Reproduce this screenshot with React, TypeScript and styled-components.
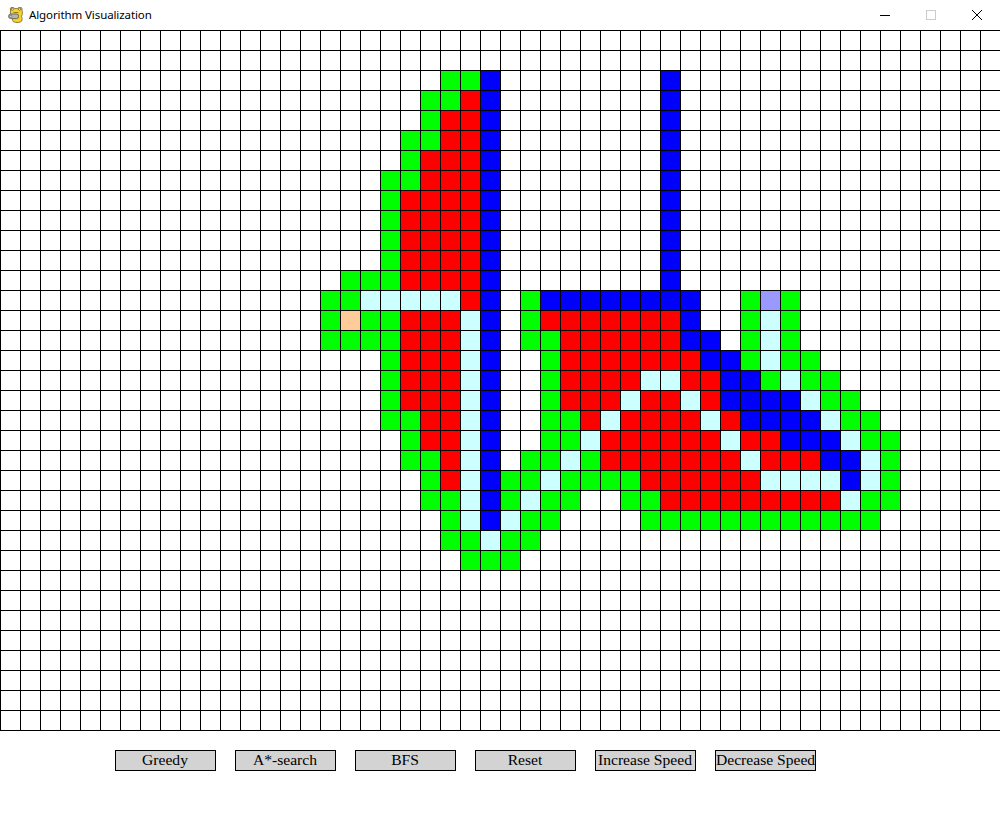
import React from "react";
import styled, { createGlobalStyle } from "styled-components";

type Kind = "empty" | "g" | "r" | "b" | "c" | "s" | "e";

const COLORS: Record<Kind, string> = {
  empty: "#ffffff",
  g: "#00ff00",
  r: "#ff0000",
  b: "#0000ff",
  c: "#ccffff",
  s: "#ffcc99",
  e: "#9999ff",
};

const COLS = 50;
const ROWS = 35;

// row -> painted runs, letter is the cell kind then a column or column range
const PAINTED: Record<number, string> = {
  2: "g22-23 b24 b33",
  3: "g21-22 r23 b24 b33",
  4: "g21 r22-23 b24 b33",
  5: "g20-21 r22-23 b24 b33",
  6: "g20 r21-23 b24 b33",
  7: "g19-20 r21-23 b24 b33",
  8: "g19 r20-23 b24 b33",
  9: "g19 r20-23 b24 b33",
  10: "g19 r20-23 b24 b33",
  11: "g19 r20-23 b24 b33",
  12: "g17-19 r20-23 b24 b33",
  13: "g16-17 c18-22 r23 b24 g26 b27-34 g37 e38 g39",
  14: "g16 s17 g18-19 r20-22 c23 b24 g26 r27-33 b34 g37 c38 g39",
  15: "g16-19 r20-22 c23 b24 g26-27 r28-33 b34-35 g37 c38 g39",
  16: "g19 r20-22 c23 b24 g27 r28-34 b35-36 g37 c38 g39-40",
  17: "g19 r20-22 c23 b24 g27 r28-31 c32-33 r34-35 b36-37 g38 c39 g40-41",
  18: "g19 r20-22 c23 b24 g27 r28-30 c31 r32-33 c34 r35 b36-39 c40 g41-42",
  19: "g19-20 r21-22 c23 b24 g27-28 r29 c30 r31-34 c35 r36 b37-40 c41 g42-43",
  20: "g20 r21-22 c23 b24 g27-28 c29 r30-35 c36 r37-38 b39-41 c42 g43-44",
  21: "g20-21 r22 c23 b24 g26-27 c28 g29 r30-36 c37 r38-40 b41-42 c43 g44",
  22: "g21 r22 c23 b24 g25-26 c27 g28-31 r32-37 c38-41 b42 c43 g44",
  23: "g21-22 c23 b24 g25 c26 g27-28 g31-32 r33-41 c42 g43-44",
  24: "g22 c23 b24 c25 g26-27 g32-43",
  25: "g22-23 c24 g25-26",
  26: "g23-25",
};

const buildCells = (): Kind[] => {
  const cells: Kind[] = new Array(COLS * ROWS).fill("empty");
  Object.entries(PAINTED).forEach(([row, runs]) => {
    runs.split(" ").forEach((run) => {
      const [from, to] = run.slice(1).split("-").map(Number);
      for (let col = from; col <= (to ?? from); col++) {
        cells[Number(row) * COLS + col] = run[0] as Kind;
      }
    });
  });
  return cells;
};

const BUTTONS = [
  "Greedy",
  "A*-search",
  "BFS",
  "Reset",
  "Increase Speed",
  "Decrease Speed",
];

const GlobalStyle = createGlobalStyle`
  html, body {
    margin: 0;
    padding: 0;
    background: #ffffff;
  }
`;

const Window = styled.div`
  width: 1000px;
  height: 827px;
  overflow: hidden;
  display: flex;
  flex-direction: column;
  background: #ffffff;
`;

const TitleBar = styled.div`
  display: flex;
  align-items: center;
  height: 30px;
  flex: none;
`;

const AppIcon = styled.svg`
  width: 16px;
  height: 16px;
  margin-left: 8px;
  flex: none;
`;

const TitleText = styled.div`
  margin-left: 5px;
  flex: 1;
  font-family: "Noto Sans", sans-serif;
  font-size: 11.5px;
  letter-spacing: -0.1px;
  line-height: 16px;
  color: #000000;
`;

const WindowControl = styled.div`
  width: 46px;
  height: 30px;
  display: flex;
  align-items: center;
  justify-content: center;
`;

const Board = styled.div`
  display: grid;
  grid-template-columns: repeat(${COLS}, 20px);
  grid-auto-rows: 20px;
  width: 1000px;
  flex: none;
  border-bottom: 1px solid #000000;
`;

const Cell = styled.div<{ $kind: Kind }>`
  box-sizing: border-box;
  border-left: 1px solid #000000;
  border-top: 1px solid #000000;
  background: ${(p) => COLORS[p.$kind]};
`;

const Toolbar = styled.div`
  display: flex;
  gap: 19px;
  padding: 19px 0 0 115px;
`;

const ActionButton = styled.button`
  box-sizing: border-box;
  width: 101px;
  height: 21px;
  padding: 0 1px 2px 0;
  border: 1px solid #000000;
  border-radius: 0;
  background: #d3d3d3;
  color: #000000;
  font-family: "Liberation Serif", "Times New Roman", serif;
  font-size: 15.6px;
  line-height: 17px;
  white-space: nowrap;
  text-align: center;
`;

const App: React.FC = () => {
  const cells = buildCells();

  return (
    <>
      <GlobalStyle />
      <Window>
        <TitleBar>
          <AppIcon viewBox="0 1 16 16">
            <path
              d="M2.5 4C1.8 2 3.2.8 4.8 1.6c1-.3 1.4.4 1.8 1 1-.3 2-.3 3 0 .4-.7 1-1.4 2-1 1.6-.8 3 .5 2.3 2.400.8 2 .6 4.500-.4 6.400.7 1.600.9 3.300.1 4.800-1 1.500-6 1.700-8 .6-1-.6-1.300-1.700-1.100-3C2.700 9.800 2.100 6.600 2.500 4z"
              fill="#f6d32a"
              stroke="#5f5210"
              strokeWidth="0.7"
            />
            <rect x="0.6" y="8" width="10" height="4.6" rx="2" fill="#b4b4ac" stroke="#4a4a48" strokeWidth="0.7" />
            <circle cx="2.8" cy="10.3" r="1.1" fill="#efefef" stroke="#3c3c3c" strokeWidth="0.5" />
            <circle cx="4.3" cy="3.2" r="1.1" fill="#ffffff" stroke="#333333" strokeWidth="0.6" />
            <circle cx="11.6" cy="3.2" r="1.1" fill="#ffffff" stroke="#333333" strokeWidth="0.6" />
            <path d="M5.5 6.5h5" stroke="#6b5a12" strokeWidth="0.7" />
          </AppIcon>
          <TitleText>Algorithm Visualization</TitleText>
          <WindowControl>
            <svg width="10" height="10" viewBox="0 0 10 10">
              <path d="M0 5.5h10" stroke="#000000" strokeWidth="1" />
            </svg>
          </WindowControl>
          <WindowControl>
            <svg width="10" height="10" viewBox="0 0 10 10">
              <rect x="0.5" y="0.5" width="9" height="9" fill="none" stroke="#cccccc" strokeWidth="1" />
            </svg>
          </WindowControl>
          <WindowControl>
            <svg width="10" height="10" viewBox="0 0 10 10">
              <path d="M0 0l10 10M10 0L0 10" stroke="#000000" strokeWidth="1" />
            </svg>
          </WindowControl>
        </TitleBar>
        <Board>
          {cells.map((kind, i) => (
            <Cell key={i} $kind={kind} />
          ))}
        </Board>
        <Toolbar>
          {BUTTONS.map((label) => (
            <ActionButton key={label}>{label}</ActionButton>
          ))}
        </Toolbar>
      </Window>
    </>
  );
};

export default App;
